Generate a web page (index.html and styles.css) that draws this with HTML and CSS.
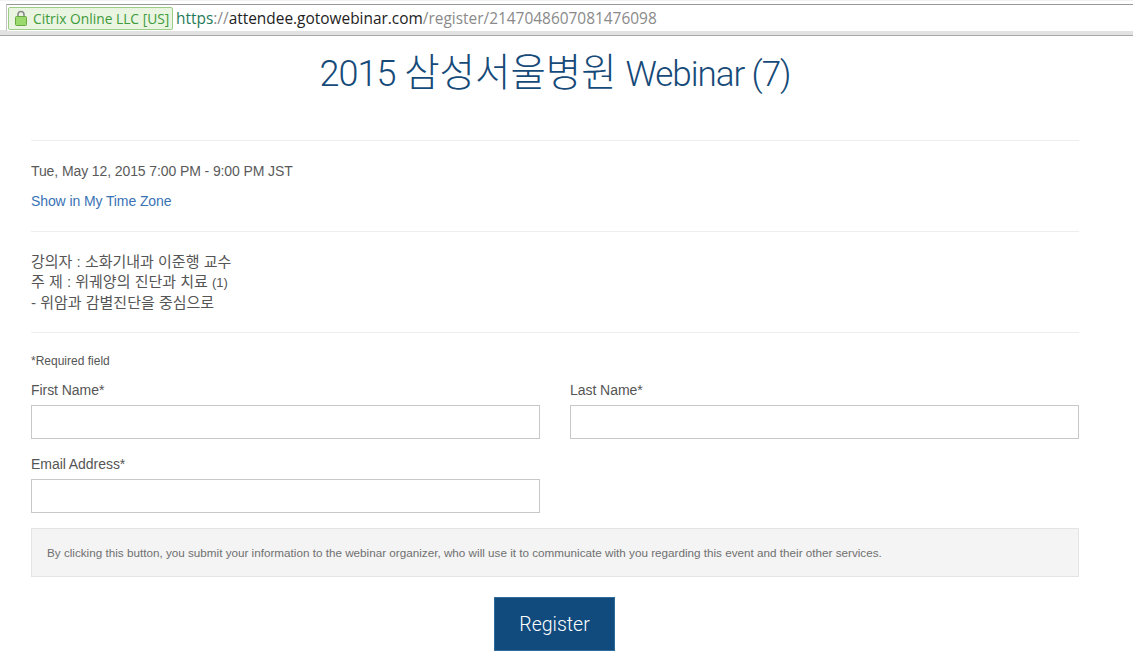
FILE: index.html
```html
<!DOCTYPE html>
<html lang="en">
<head>
<meta charset="utf-8">
<title>2015 삼성서울병원 Webinar (7)</title>
<link rel="stylesheet" href="styles.css">
</head>
<body>
<div class="chrome">
  <div class="omnibox">
    <div class="ev">
      <svg class="lock" width="12" height="16" viewBox="0 0 12 16"><path d="M3 7V4.500a3 3 0 0 1 6 0V7" fill="none" stroke="#8a8a8a" stroke-width="1.600"/><rect x="0.500" y="6.500" width="11" height="9" rx="1" fill="#9ad96c" stroke="#6aa845"/></svg>
      <span>Citrix Online LLC [US]</span>
    </div>
    <div class="url"><span class="scheme">https</span><span class="dim">://</span><span class="host">attendee.gotowebinar.com</span><span class="dim">/register/2147048607081476098</span></div>
  </div>
</div>
<main class="page">
  <h1 class="title"><span class="t-num">2015</span> <span class="t-ko">삼성서울병원</span> <span class="t-la">Webinar (7)</span></h1>
  <section class="when">
    <p class="date">Tue, May 12, 2015 7:00 PM - 9:00 PM JST</p>
    <a class="tz" href="#">Show in My Time Zone</a>
  </section>
  <section class="desc">
    <p>강의자 : 소화기내과 이준행 교수</p>
    <p>주 제 : 위궤양의 진단과 치료 <span class="paren">(1)</span></p>
    <p>- 위암과 감별진단을 중심으로</p>
  </section>
  <form class="form">
    <p class="req">*Required field</p>
    <div class="grid">
      <label class="field"><span>First Name*</span><input type="text"></label>
      <label class="field"><span>Last Name*</span><input type="text"></label>
      <label class="field"><span>Email Address*</span><input type="text"></label>
    </div>
    <div class="notice">By clicking this button, you submit your information to the webinar organizer, who will use it to communicate with you regarding this event and their other services.</div>
    <div class="actions"><button type="button" class="register">Register</button></div>
  </form>
</main>
</body>
</html>
```
FILE: styles.css
```css
* { box-sizing: border-box; }
html, body { margin: 0; padding: 0; }
body {
  background: #fff;
  color: #444;
  font-family: "Liberation Sans", "Noto Sans CJK KR", sans-serif;
  height: 657px;
  overflow: hidden;
}
p { margin: 0; }
.chrome {
  height: 36px;
  background: #fff;
  border-top: 1px solid #f2f2f2;
  border-bottom: 1px solid #a8a8a8;
  box-shadow: inset 0 -5px 0 #e2e2e2;
  padding-top: 3px;
}
.omnibox {
  height: 27px;
  margin-left: 6px;
  background: #fff;
  border-top: 1px solid #9a9a9a;
  border-left: 1px solid #c4c4c4;
  display: flex;
  align-items: center;
  padding-left: 1px;
}
.ev {
  height: 23px;
  width: 165px;
  display: flex;
  align-items: center;
  gap: 6px;
  padding-left: 6px;
  background: #e9f5e1;
  border: 1px solid #9ccb86;
  border-radius: 2px;
  color: #3f9a3a;
  font: 13.800px "Open Sans", sans-serif;
  white-space: nowrap;
}
.url {
  margin-left: 3px;
  font: 15.430px "Open Sans", sans-serif;
  white-space: nowrap;
}
.scheme { color: #1f7a5a; }
.dim { color: #8a8a8a; }
.host { color: #222; }
.page {
  width: 1048px;
  margin-left: 31px;
}
.title {
  margin: 0;
  height: 105px;
  padding-top: 13px;
  text-align: center;
  font-family: Roboto, "Noto Sans CJK KR", sans-serif;
  font-size: 36px;
  font-weight: 300;
  line-height: 48px;
  color: #164a78;
  border-bottom: 1px solid #eee;
  white-space: nowrap;
}
.t-num { letter-spacing: -1px; }
.t-ko { font-size: 38.500px; }
.t-la { font-size: 35px; letter-spacing: -1.050px; }
.when {
  height: 91px;
  padding-top: 20px;
  border-bottom: 1px solid #eee;
  font-size: 14px;
  line-height: 20px;
  letter-spacing: -0.100px;
}
.date { color: #5a5a5a; margin-bottom: 10px; }
.tz { color: #3a72b5; text-decoration: none; display: block; }
.desc {
  height: 101px;
  padding-top: 20px;
  border-bottom: 1px solid #eee;
  font-size: 15px;
  line-height: 20px;
  color: #555;
}
.paren { font-size: 13px; }
.req {
  margin-top: 20px;
  font-size: 12px;
  line-height: 16px;
  color: #555;
}
.grid {
  margin-top: 11px;
  display: grid;
  grid-template-columns: 509px 509px;
  column-gap: 30px;
  row-gap: 15px;
}
.field { display: flex; flex-direction: column; }
.field span { font-size: 14px; line-height: 20px; color: #555; margin-bottom: 5px; letter-spacing: -0.050px; }
.field input {
  height: 34px;
  border: 1px solid #c8c8c8;
  background: #fff;
  padding: 0 8px;
  outline: none;
}
.notice {
  margin-top: 15px;
  height: 49px;
  background: #f4f4f4;
  border: 1px solid #e4e4e4;
  padding: 0 15px;
  display: flex;
  align-items: center;
  font-size: 11.700px;
  color: #707070;
}
.actions {
  margin-top: 20px;
  display: flex;
  justify-content: center;
  padding-right: 1px;
}
.register {
  width: 121px;
  height: 54px;
  background: #114a7c;
  border: 1px solid #2f6c9e;
  color: #fff;
  font: 300 19.500px Roboto, sans-serif;
  padding: 0;
}
```
